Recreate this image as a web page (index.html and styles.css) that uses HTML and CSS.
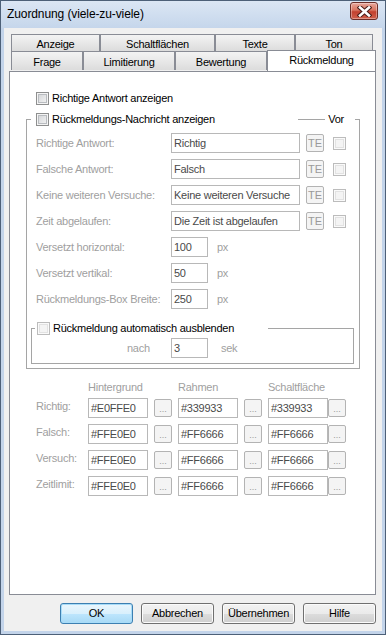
FILE: index.html
```html
<!DOCTYPE html>
<html lang="de">
<head>
    <meta charset="UTF-8">
    <title>Zuordnung (viele-zu-viele)</title>
    <link rel="stylesheet" href="styles.css">
</head>
<body>
<div class="window">
    <div class="titlebar">
        <span class="title">Zuordnung (viele-zu-viele)</span>
        <span class="close">
            <svg width="15" height="11" viewBox="0 0 15 11">
                <path d="M3 1.5 L12 9.5 M12 1.5 L3 9.5" stroke="#4a1d19" stroke-width="4.6" stroke-linecap="square"/>
                <path d="M3 1.5 L12 9.5 M12 1.5 L3 9.5" stroke="#ffffff" stroke-width="2.6" stroke-linecap="square"/>
            </svg>
        </span>
    </div>

    <div class="client">
        <div class="tabs">
            <div class="tab-row back">
                <span class="tab t-anzeige">Anzeige</span>
                <span class="tab t-schalt">Schaltflächen</span>
                <span class="tab t-texte">Texte</span>
                <span class="tab t-ton">Ton</span>
            </div>
            <div class="tab-row front">
                <span class="tab t-frage">Frage</span>
                <span class="tab t-limit">Limitierung</span>
                <span class="tab t-bewert">Bewertung</span>
                <span class="tab t-rueck active">Rückmeldung</span>
            </div>
        </div>

        <div class="panel">
            <div class="check-row">
                <span class="box"></span>Richtige Antwort anzeigen
            </div>

            <div class="group">
                <div class="group-head">
                    <span class="check"><span class="box"></span>Rückmeldungs-Nachricht anzeigen</span>
                    <span class="vor">Vor</span>
                </div>

                <div class="fields">
                    <span class="lbl">Richtige Antwort:</span>
                    <div class="tb">Richtig</div>
                    <span class="te">TE</span>
                    <span class="box off"></span>

                    <span class="lbl">Falsche Antwort:</span>
                    <div class="tb">Falsch</div>
                    <span class="te">TE</span>
                    <span class="box off"></span>

                    <span class="lbl">Keine weiteren Versuche:</span>
                    <div class="tb">Keine weiteren Versuche</div>
                    <span class="te">TE</span>
                    <span class="box off"></span>

                    <span class="lbl">Zeit abgelaufen:</span>
                    <div class="tb">Die Zeit ist abgelaufen</div>
                    <span class="te">TE</span>
                    <span class="box off"></span>

                    <span class="lbl">Versetzt horizontal:</span>
                    <div class="unit"><div class="tb short">100</div><span class="px">px</span></div>

                    <span class="lbl">Versetzt vertikal:</span>
                    <div class="unit"><div class="tb short">50</div><span class="px">px</span></div>

                    <span class="lbl">Rückmeldungs-Box Breite:</span>
                    <div class="unit"><div class="tb short">250</div><span class="px">px</span></div>
                </div>

                <div class="group inner">
                    <div class="group-head">
                        <span class="check"><span class="box off"></span>Rückmeldung automatisch ausblenden</span>
                    </div>
                    <div class="after">
                        <span class="nach">nach</span>
                        <div class="tb short">3</div>
                        <span class="sek">sek</span>
                    </div>
                </div>
            </div>

            <div class="colors">
                <span></span>
                <span class="hd">Hintergrund</span>
                <span class="hd">Rahmen</span>
                <span class="hd">Schaltfläche</span>

                <span class="clbl">Richtig:</span>
                <div class="tb">#E0FFE0</div><span class="dots">...</span>
                <div class="tb">#339933</div><span class="dots">...</span>
                <div class="tb">#339933</div><span class="dots">...</span>

                <span class="clbl">Falsch:</span>
                <div class="tb">#FFE0E0</div><span class="dots">...</span>
                <div class="tb">#FF6666</div><span class="dots">...</span>
                <div class="tb">#FF6666</div><span class="dots">...</span>

                <span class="clbl">Versuch:</span>
                <div class="tb">#FFE0E0</div><span class="dots">...</span>
                <div class="tb">#FF6666</div><span class="dots">...</span>
                <div class="tb">#FF6666</div><span class="dots">...</span>

                <span class="clbl">Zeitlimit:</span>
                <div class="tb">#FFE0E0</div><span class="dots">...</span>
                <div class="tb">#FF6666</div><span class="dots">...</span>
                <div class="tb">#FF6666</div><span class="dots">...</span>
            </div>
        </div>

        <div class="buttons">
            <button class="btn default">OK</button>
            <button class="btn">Abbrechen</button>
            <button class="btn">Übernehmen</button>
            <button class="btn">Hilfe</button>
        </div>
    </div>
</div>
</body>
</html>
```

FILE: styles.css
```css
body {
    margin: 0;
    font-family: "Liberation Sans", Arial, sans-serif;
    font-size: 11px;
    letter-spacing: -0.25px;
    color: #000;
}
.window {
    width: 386px;
    height: 635px;
    box-sizing: border-box;
    border: 1px solid #4d6078;
    background: #c3d4ea;
    display: flex;
    flex-direction: column;
}
.titlebar {
    height: 27px;
    flex: none;
    display: flex;
    justify-content: space-between;
    align-items: flex-start;
    background: linear-gradient(#dbe6f4, #c5d6eb);
}
.title {
    font-size: 12px;
    letter-spacing: -0.1px;
    line-height: 15px;
    margin: 6px 0 0 6px;
}
.close {
    width: 28px;
    height: 18px;
    box-sizing: border-box;
    margin: 1px 7px 0 0;
    border: 1px solid #6b2d27;
    border-radius: 3px;
    background: linear-gradient(#e8a89c 0%, #d7735f 45%, #c2412f 55%, #d0604c 100%);
    box-shadow: inset 0 0 0 1px rgba(255,255,255,0.35);
    display: flex;
    align-items: center;
    justify-content: center;
}
.client {
    flex: 1;
    margin: 0 3px 3px 3px;
    background: #f0f0f0;
    display: flex;
    flex-direction: column;
    padding: 6px 6px 7px 5px;
}

/* tabs */
.tabs {
    padding-left: 2px;
}
.tab-row {
    display: flex;
}
.tab {
    box-sizing: border-box;
    border: 1px solid #898c95;
    border-bottom: none;
    background: linear-gradient(#f3f3f3, #e8e8e8 50%, #dcdcdc);
    text-align: center;
    line-height: 14px;
}
.back .tab {
    height: 17px;
    padding-top: 2px;
}
.front .tab {
    height: 19px;
    padding-top: 3px;
}
.front .tab.active {
    height: 21px;
    margin-top: -1px;
    padding-top: 2px;
    background: #fff;
    position: relative;
    z-index: 2;
}
.t-anzeige { width: 89px; }
.t-schalt { width: 115px; }
.t-texte { width: 80px; }
.t-ton { width: 78px; }
.t-frage { width: 72px; }
.t-limit { width: 92px; }
.t-bewert { width: 92px; }
.t-rueck { width: 109px; }

.panel {
    flex: 1;
    border: 1px solid #898c95;
    background: #fff;
    padding: 0 0 0 16px;
}

/* checkboxes */
.box {
    display: inline-block;
    width: 13px;
    height: 13px;
    box-sizing: border-box;
    border: 1px solid #8e8f8f;
    background: linear-gradient(135deg, #cfd1d4, #f7f7f7);
    box-shadow: inset 0 0 0 1px #f4f4f4, inset 0 0 0 2px #b9bcc0;
    margin-right: 3px;
    flex: none;
}
.box.off {
    border-color: #bcbcbc;
    background: #f4f4f4;
    box-shadow: inset 0 0 0 1px #fafafa, inset 0 0 0 2px #e2e2e2;
}
.check-row {
    display: flex;
    align-items: center;
    height: 13px;
    line-height: 13px;
    margin: 20px 0 0 10px;
}

/* group boxes */
.group {
    width: 334px;
    box-sizing: border-box;
    margin-top: 14px;
    border: 1px solid #a5a5a5;
    padding-bottom: 4px;
}
.group-head {
    display: flex;
    height: 13px;
    line-height: 13px;
    margin-top: -7px;
}
.group-head .check {
    display: flex;
    align-items: center;
    box-sizing: border-box;
    width: 267px;
    margin-left: 4px;
    padding-left: 5px;
    background: #fff;
}
.vor {
    margin-left: auto;
    margin-right: 4px;
    padding: 0 11px 0 3px;
    background: #fff;
}
.fields {
    display: grid;
    grid-template-columns: 135px 135px 27px 13px;
    grid-auto-rows: 20px;
    row-gap: 6px;
    margin: 7px 0 0 9px;
}
.lbl {
    color: #a0a0a0;
    line-height: 13px;
    padding-top: 4px;
    white-space: nowrap;
}
.tb {
    box-sizing: border-box;
    width: 129px;
    height: 20px;
    border: 1px solid #b8b8b8;
    padding: 1px 2px 0;
    line-height: 16px;
    color: #4a4a4a;
    background: #fff;
    white-space: nowrap;
    overflow: hidden;
}
.tb.short {
    width: 37px;
}
.te {
    box-sizing: border-box;
    width: 18px;
    height: 18px;
    margin-top: 1px;
    border: 1px solid #b3b3b3;
    border-radius: 2px;
    background: #f4f4f4;
    color: #9a9a9a;
    text-align: center;
    line-height: 16px;
    font-size: 11px;
    letter-spacing: 0;
}
.fields .box {
    margin-top: 4px;
}
.unit {
    grid-column: 2 / 5;
    display: flex;
}
.px {
    color: #a0a0a0;
    margin-left: 9px;
    line-height: 13px;
    padding-top: 4px;
}

.group.inner {
    width: 323px;
    margin: 19px 0 0 4px;
    padding-bottom: 5px;
}
.inner .group-head .check {
    width: 233px;
    margin-left: 3px;
    padding-left: 2px;
}
.after {
    display: flex;
    margin-top: 3px;
}
.nach {
    width: 44px;
    margin-left: 95px;
    color: #a0a0a0;
    line-height: 13px;
    padding-top: 4px;
}
.sek {
    color: #a0a0a0;
    margin-left: 13px;
    line-height: 13px;
    padding-top: 4px;
}

/* colour table */
.colors {
    display: grid;
    grid-template-columns: 52px 66px 24px 66px 24px 60px 18px;
    grid-template-rows: 12px;
    grid-auto-rows: 20px;
    row-gap: 6px;
    margin: 11px 0 0 10px;
}
.colors .tb {
    width: 60px;
}
.hd {
    grid-column: span 2;
    color: #a0a0a0;
    line-height: 12px;
    padding-top: 1px;
}
.clbl {
    color: #a0a0a0;
    line-height: 13px;
    padding-top: 2px;
}
.dots {
    box-sizing: border-box;
    width: 18px;
    height: 18px;
    margin-top: 1px;
    border: 1px solid #b3b3b3;
    border-radius: 2px;
    background: #f4f4f4;
    color: #9a9a9a;
    text-align: center;
    line-height: 19px;
    font-size: 9px;
    letter-spacing: 0;
}

/* dialog buttons */
.buttons {
    display: flex;
    justify-content: flex-end;
    gap: 8px;
    margin-top: 8px;
}
.btn {
    width: 73px;
    height: 21px;
    box-sizing: border-box;
    border: 1px solid #707070;
    border-radius: 3px;
    background: linear-gradient(#f2f2f2 0%, #ebebeb 50%, #dddddd 51%, #cfcfcf 100%);
    box-shadow: inset 0 0 0 1px #fbfbfb;
    font-family: "Liberation Sans", Arial, sans-serif;
    font-size: 11px;
    letter-spacing: -0.25px;
    line-height: 17px;
    color: #000;
    padding: 0;
}
.btn.default {
    border-color: #3c7fb1;
    background: linear-gradient(#eaf6fd 0%, #d9f0fc 50%, #bee6fd 51%, #a7d9f5 100%);
    box-shadow: inset 0 0 0 1px #a8dcf8;
}
```
